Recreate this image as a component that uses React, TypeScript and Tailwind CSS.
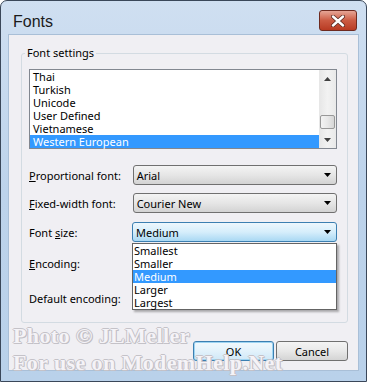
const ui = "[font-family:'Noto_Sans','Liberation_Sans',sans-serif]";

function Arrow() {
  return (
    <svg width="7" height="4" viewBox="0 0 7 4" className="shrink-0">
      <path d="M0 0H7L3.5 4Z" fill="#000" />
    </svg>
  );
}

function Combo({ value, focused }: { value?: string; focused?: boolean }) {
  return (
    <div
      className={
        focused
          ? "flex h-[20px] w-[205px] items-center justify-between rounded-[3px] border border-[#3c7fb1] bg-gradient-to-b from-[#edf7fd] via-[#d6eefb] to-[#a9d8f3] pl-[3px] pr-[5px]"
          : "flex h-[20px] w-[205px] items-center justify-between rounded-[3px] border border-[#707070] bg-gradient-to-b from-[#f4f4f4] via-[#e6e6e6] to-[#d3d3d3] pl-[3px] pr-[5px]"
      }
    >
      <span>{value}</span>
      <Arrow />
    </div>
  );
}

function Row({
  label,
  children,
  className,
}: {
  label: React.ReactNode;
  children: React.ReactNode;
  className?: string;
}) {
  return (
    <div className={"flex items-center " + (className ?? "")}>
      <div className="w-[104px]">{label}</div>
      {children}
    </div>
  );
}

const langs = ["Thai", "Turkish", "Unicode", "User Defined", "Vietnamese", "Western European"];
const sizes = ["Smallest", "Smaller", "Medium", "Larger", "Largest"];

export default function App() {
  return (
    <div
      className={
        "relative flex h-[382px] w-[367px] flex-col overflow-hidden rounded-t-[7px] border border-[#3a4759] bg-gradient-to-b from-[#cfdff1] via-[#bdd3eb] to-[#b9d1ea] px-[7px] pb-[10px] text-[11px] leading-[13px] text-black " +
        ui
      }
    >
      {/* title bar */}
      <div className="flex h-[33px] shrink-0 justify-between">
        <div className="pl-[5px] pt-[11px] text-[16px] leading-[20px] text-[#1b1b1b] [font-family:'Liberation_Sans',sans-serif]">
          Fonts
        </div>
        <div className="mr-[2px] mt-[9px] flex h-[21px] w-[38px] items-center justify-center rounded-[3px] border border-[#6e2a1f] bg-gradient-to-b from-[#e5a596] via-[#cb5a42] to-[#b83a22]">
          <svg width="14" height="12" viewBox="0 0 14 12">
            <path d="M2 1.5L12 10.5M12 1.5L2 10.5" stroke="#5a2a22" strokeWidth="4" strokeLinecap="round" />
            <path d="M2 1.5L12 10.5M12 1.5L2 10.5" stroke="#fff" strokeWidth="2.4" strokeLinecap="round" />
          </svg>
        </div>
      </div>

      {/* client area */}
      <div className="flex flex-1 flex-col border border-[#a9bfd7] bg-[#f0eff3]">
        {/* group box */}
        <div className="relative ml-[12px] mr-[10px] mt-[18px] h-[270px] rounded-[3px] border border-[#d3dbe2] pl-[7px] pr-[10px] pt-[15px]">
          <span className="absolute left-[3px] top-[-8px] bg-[#f0eff3] px-[2px] leading-[14px]">
            Font settings
          </span>

          {/* list box */}
          <div className="flex h-[80px] border border-[#828790] bg-white">
            <div className="flex flex-1 flex-col">
              {langs.map((l, i) => (
                <div
                  key={l}
                  className={
                    "h-[13px] pl-[3px] leading-[13px] " +
                    (i === langs.length - 1 ? "bg-[#3399ff] text-white" : "")
                  }
                >
                  {l}
                </div>
              ))}
            </div>
            <div className="flex w-[17px] flex-col bg-gradient-to-r from-[#e6e6e6] via-[#f2f2f2] to-[#e9e9e9]">
              <div className="flex h-[17px] items-center justify-center">
                <svg width="7" height="4" viewBox="0 0 7 4">
                  <path d="M0 4H7L3.5 0Z" fill="#404040" />
                </svg>
              </div>
              <div className="flex flex-1 flex-col justify-end pb-[2px]">
                <div className="mx-[1px] h-[14px] rounded-[2px] border border-[#989898] bg-gradient-to-r from-[#f3f3f3] via-[#e8e8e8] to-[#d6d6d6]" />
              </div>
              <div className="flex h-[17px] items-center justify-center">
                <svg width="7" height="4" viewBox="0 0 7 4">
                  <path d="M0 0H7L3.5 4Z" fill="#404040" />
                </svg>
              </div>
            </div>
          </div>

          <Row
            className="mt-[16px]"
            label={
              <>
                <span className="underline">P</span>roportional font:
              </>
            }
          >
            <Combo value="Arial" />
          </Row>
          <Row
            className="mt-[8px]"
            label={
              <>
                <span className="underline">F</span>ixed-width font:
              </>
            }
          >
            <Combo value="Courier New" />
          </Row>
          <Row
            className="relative z-10 mt-[9px]"
            label={
              <>
                Font <span className="underline">s</span>ize:
              </>
            }
          >
            <div className="relative">
              <Combo value="Medium" focused />
              <div className="absolute left-0 top-[21px] h-[67px] w-[205px] border border-[#646464] bg-white shadow-[2px_2px_2px_rgba(0,0,0,0.3)]">
                {sizes.map((s) => (
                  <div
                    key={s}
                    className={
                      "h-[13px] pl-[1px] leading-[13px] " +
                      (s === "Medium" ? "bg-[#3399ff] text-white" : "")
                    }
                  >
                    {s}
                  </div>
                ))}
              </div>
            </div>
          </Row>
          <Row
            className="mt-[11px]"
            label={
              <>
                <span className="underline">E</span>ncoding:
              </>
            }
          >
            <Combo />
          </Row>
          <Row className="mt-[15px]" label="Default encoding:">
            <Combo />
          </Row>
        </div>

        {/* buttons */}
        <div className="mr-[10px] mt-[18px] flex justify-end gap-[2px]">
          <div className="flex h-[20px] w-[81px] items-center justify-center rounded-[3px] border border-[#3c7fb1] bg-gradient-to-b from-[#f2f9fd] via-[#e3f2fb] to-[#cfe8f7] shadow-[inset_0_0_0_1px_#9ed4f2]">
            OK
          </div>
          <div className="flex h-[20px] w-[72px] items-center justify-center rounded-[3px] border border-[#707070] bg-gradient-to-b from-[#f4f4f4] via-[#e8e8e8] to-[#d4d4d4]">
            Cancel
          </div>
        </div>
      </div>

      {/* watermark overlay */}
      <div className="pointer-events-none absolute left-[12px] top-[321px] text-[22px] font-bold leading-[27px] tracking-[0.4px] text-[#f5f3f7] [font-family:'Liberation_Serif',serif] [text-shadow:1px_0_#c4c2c8,-1px_0_#c4c2c8,0_1px_#c4c2c8,0_-1px_#c4c2c8,1px_1px_#bdbbc1]">
        <div>Photo © JLMeller</div>
        <div>For use on ModemHelp.Net</div>
      </div>
    </div>
  );
}
